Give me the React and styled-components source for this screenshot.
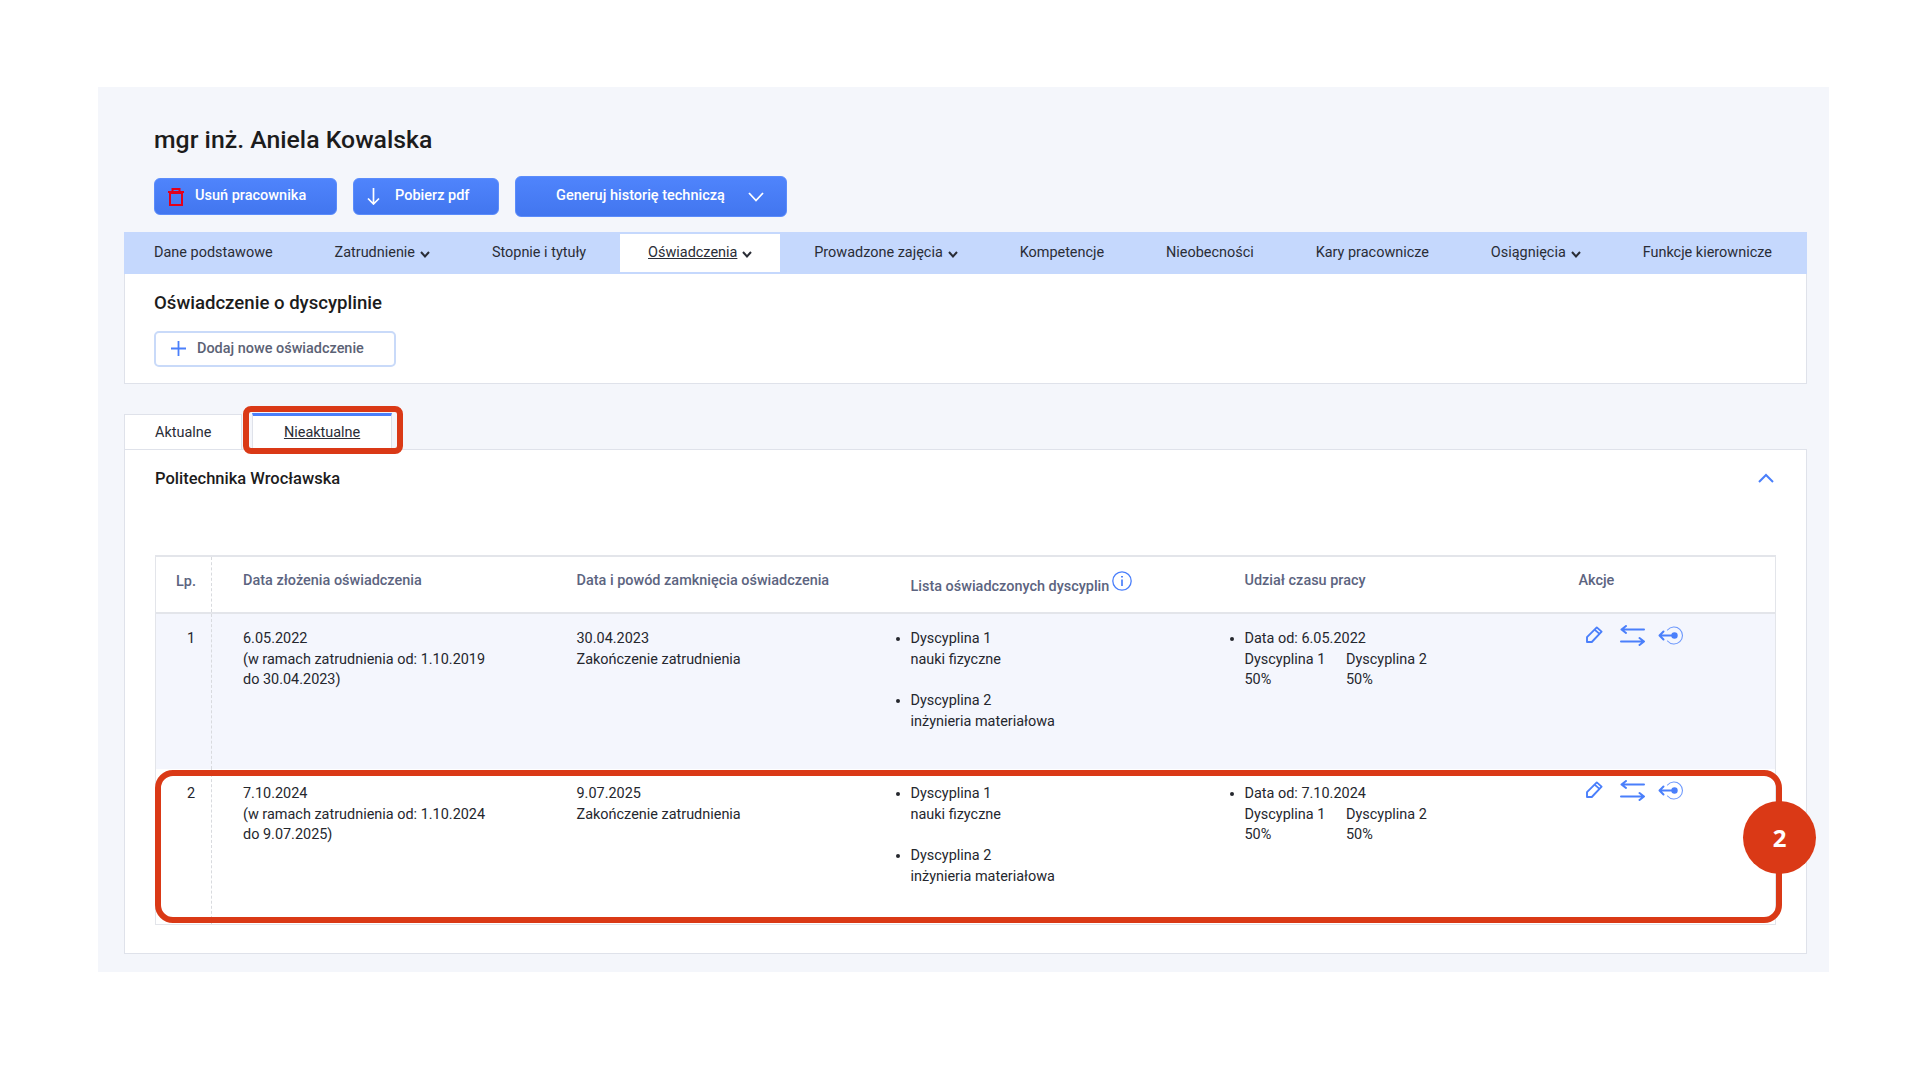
import React from "react"
import styled, { createGlobalStyle } from "styled-components"

const Global = createGlobalStyle`
  * { box-sizing: border-box; }
  html, body { margin: 0; padding: 0; background: #fff; }
  body { font-family: Roboto, "Liberation Sans", sans-serif; color: #222; font-size: 14.45px; }
`

const Panel = styled.div`
  width: 1731px;
  height: 885px;
  margin: 87px 0 0 98px;
  padding: 38px 22px 18px 26px;
  background: #f4f6fb;
`
const Head = styled.div`
  padding-left: 30px;
`
const Title = styled.h1`
  margin: 0;
  font-size: 24.8px;
  line-height: 30px;
  font-weight: 500;
  color: #1c1c1c;
`
const Toolbar = styled.div`
  display: flex;
  align-items: center;
  gap: 16px;
  margin: 21px 0 15px;
`
const Btn = styled.button`
  display: flex;
  align-items: center;
  height: ${p => (p.$big ? 41 : 37)}px;
  width: ${p => p.$w}px;
  padding: 0 0 2px ${p => p.$pl}px;
  border: 1px solid #5b8cfb;
  border-radius: 6px;
  background: linear-gradient(#4f84fc, #4276ef);
  color: #fff;
  font: 500 14.5px Roboto, sans-serif;
`
const BtnIcon = styled.svg`
  flex: none;
  margin: 2px ${p => p.$mr || 0}px 0 ${p => p.$ml || 0}px;
`
const Nav = styled.nav`
  display: flex;
  justify-content: space-between;
  height: 42px;
  padding: 2px 7px 2px 2px;
  background: #c5d8fd;
`
const NavItem = styled.a`
  display: flex;
  align-items: center;
  padding: 0 28px 1px;
  background: ${p => (p.$active ? "#fff" : "transparent")};
  color: #2a2d36;
  font-size: 14.45px;
  span { text-decoration: ${p => (p.$active ? "underline" : "none")}; }
`
const Caret = styled.svg`
  margin: 3px 0 0 5px;
`
const TopCard = styled.section`
  height: 110px;
  padding: 17px 29px 0;
  background: #fff;
  border: 1px solid #dfe2ea;
  border-top: 0;
`
const SectionTitle = styled.h2`
  margin: 0;
  font-size: 18.6px;
  line-height: 24px;
  font-weight: 500;
  color: #1c1c1c;
`
const AddBtn = styled.button`
  display: flex;
  align-items: center;
  gap: 11px;
  width: 242px;
  height: 36px;
  margin-top: 16px;
  padding: 0 0 1px 15px;
  background: #fff;
  border: 2px solid #c9daf9;
  border-radius: 5px;
  color: #5b6275;
  font: 500 14.45px Roboto, sans-serif;
`
const Tabs = styled.div`
  display: flex;
  gap: 9.5px;
  height: 35px;
  margin-top: 30px;
`
const Tab = styled.a`
  position: relative;
  display: flex;
  align-items: center;
  padding: 0 30px;
  background: #fff;
  color: #2a2d36;
  font-size: 14.45px;
  border: 1px solid #dfe2ea;
  border-bottom: 0;
  ${p => p.$active && `
    padding: 0 31px;
    margin-top: -1px;
    height: 36px;
    border-top: 3px solid #4a7ffb;
    text-decoration: underline;
  `}
`
const Callout = styled.div`
  position: absolute;
  border: 6px solid #da3916;
  pointer-events: none;
`
const TabCallout = styled(Callout)`
  left: -10px;
  right: -12px;
  top: -10px;
  bottom: -5px;
  border-radius: 8px;
`
const ListCard = styled.section`
  height: 505px;
  padding: 16px 30px 0;
  background: #fff;
  border: 1px solid #dfe2ea;
`
const ListHead = styled.div`
  display: flex;
  justify-content: space-between;
  align-items: center;
  height: 24px;
  padding-right: 2px;
`
const School = styled.h3`
  margin: 0;
  font-size: 16.5px;
  font-weight: 500;
  color: #1c1c1c;
`
const Table = styled.div`
  width: 1621px;
  margin-top: 65px;
  border: 1px solid #e3e5ea;
  border-top-width: 2px;
`
const Row = styled.div`
  position: relative;
  display: grid;
  grid-template-columns: 56px 333.5px 334px 334px 334px 1fr;
  height: ${p => (p.$head ? 57 : 155)}px;
  background: ${p => (p.$tint ? "#f4f6fd" : "#fff")};
  border-bottom: ${p => (p.$head ? "2px solid #e3e5ea" : "0")};
`
const Cell = styled.div`
  padding: 15px 10px 0 31px;
  line-height: 20.7px;
  color: #25272e;
`
const NumCell = styled(Cell)`
  padding: 15px 16px 0 0;
  text-align: right;
  border-right: 1px dashed #d8dade;
`
const HeadCell = styled(Cell)`
  display: flex;
  align-items: flex-start;
  padding-top: ${p => (p.$low ? 20 : 14)}px;
  color: #5c6480;
  font-weight: 500;
`
const HeadNum = styled(HeadCell)`
  justify-content: flex-end;
  padding: 15px 15px 0 0;
  border-right: 1px dashed #d8dade;
`
const Info = styled.svg`
  flex: none;
  margin: -6px 0 0 3px;
`
const Bullets = styled.ul`
  margin: 0;
  padding: 0;
  li + li { margin-top: 20.7px; }
`
const Shares = styled.div`
  display: grid;
  grid-template-columns: 101.5px 101.5px;
`
const Actions = styled.div`
  display: flex;
  align-items: flex-start;
  margin: -3px 0 0 7px;
`
const ActionSlot = styled.span`
  display: block;
  margin: ${p => p.$up || 0}px 0 0 ${p => p.$gap || 0}px;
`
const RowCallout = styled(Callout)`
  left: -1px;
  right: -7px;
  top: 1px;
  bottom: 1px;
  border-radius: 18px;
`
const Badge = styled.div`
  position: absolute;
  top: 25px;
  right: -40px;
  width: 73px;
  height: 73px;
  display: flex;
  align-items: center;
  justify-content: center;
  border-radius: 50%;
  background: #da3916;
  color: #fff;
  font: 700 24px "Open Sans", sans-serif;
`

const tabs = [
  { label: "Dane podstawowe" },
  { label: "Zatrudnienie", menu: true },
  { label: "Stopnie i tytuły" },
  { label: "Oświadczenia", menu: true, active: true },
  { label: "Prowadzone zajęcia", menu: true },
  { label: "Kompetencje" },
  { label: "Nieobecności" },
  { label: "Kary pracownicze" },
  { label: "Osiągnięcia", menu: true },
  { label: "Funkcje kierownicze" },
]

const rows = [
  {
    no: 1,
    filed: "6.05.2022",
    scope: "(w ramach zatrudnienia od: 1.10.2019",
    scopeEnd: "do 30.04.2023)",
    closed: "30.04.2023",
    from: "6.05.2022",
    tint: true,
  },
  {
    no: 2,
    filed: "7.10.2024",
    scope: "(w ramach zatrudnienia od: 1.10.2024",
    scopeEnd: "do 9.07.2025)",
    closed: "9.07.2025",
    from: "7.10.2024",
    marked: true,
  },
]

function PencilIcon() {
  return (
    <svg width="17" height="17" viewBox="0 0 17 17" fill="none" stroke="#4a7ffb" strokeWidth="1.9" strokeLinejoin="round">
      <path d="M1 16V11.2L10.8 1.4 15.6 5.6 5.8 16Z" />
      <path d="M8.6 3.6l4.9 4.3" />
    </svg>
  )
}

function SwapIcon() {
  return (
    <svg width="25" height="21" viewBox="0 0 25 21" fill="none" stroke="#4a7ffb" strokeWidth="2" strokeLinecap="round" strokeLinejoin="round">
      <path d="M1.5 4.5H24M6 1L1.5 4.5 6 8" />
      <path d="M1 16.5H24M19.5 13l4.5 3.5-4.5 3.5" />
    </svg>
  )
}

function ReturnIcon() {
  return (
    <svg width="27" height="19" viewBox="0 0 27 19" fill="none" stroke="#4a7ffb" strokeLinecap="round" strokeLinejoin="round">
      <path d="M9.5 4A8.5 8.5 0 1 1 9.5 15" strokeWidth="1.1" strokeOpacity=".8" />
      <path d="M1.5 9.5H16M5.5 5.5l-4 4 4 4" strokeWidth="2" />
      <circle cx="16.5" cy="9.5" r="3.2" fill="#4a7ffb" stroke="none" />
    </svg>
  )
}

export default function App() {
  return (
    <>
      <Global />
      <Panel>
        <Head>
          <Title>mgr inż. Aniela Kowalska</Title>
          <Toolbar>
            <Btn $w={183} $pl={12}>
              <BtnIcon $mr={10} width="18" height="18" viewBox="0 0 18 18" fill="none" stroke="#e3001b" strokeWidth="2">
                <path d="M1 4H17M5.5 4V1H12.5V4" />
                <rect x="3" y="5" width="12" height="12" />
              </BtnIcon>
              Usuń pracownika
            </Btn>
            <Btn $w={146} $pl={13}>
              <BtnIcon $mr={15} width="13" height="17" viewBox="0 0 13 17" fill="none" stroke="#fff" strokeWidth="1.7">
                <path d="M6.5 0V16M1 10.5L6.5 16 12 10.5" />
              </BtnIcon>
              Pobierz pdf
            </Btn>
            <Btn $big $w={272} $pl={40}>
              Generuj historię techniczą
              <BtnIcon $ml={23} width="16" height="10" viewBox="0 0 16 10" fill="none" stroke="#fff" strokeWidth="1.8">
                <path d="M1 1l7 7.5L15 1" />
              </BtnIcon>
            </Btn>
          </Toolbar>
        </Head>
        <Nav>
          {tabs.map(t => (
            <NavItem key={t.label} $active={t.active}>
              <span>{t.label}</span>
              {t.menu && (
                <Caret width="10" height="7" viewBox="0 0 10 7" fill="none" stroke="#2a2d36" strokeWidth="2">
                  <path d="M1 1l4 4.5L9 1" />
                </Caret>
              )}
            </NavItem>
          ))}
        </Nav>
        <TopCard>
          <SectionTitle>Oświadczenie o dyscyplinie</SectionTitle>
          <AddBtn>
            <svg width="15" height="15" viewBox="0 0 15 15" fill="none" stroke="#4a7ffb" strokeWidth="1.8">
              <path d="M7.5 0V15M0 7.5H15" />
            </svg>
            Dodaj nowe oświadczenie
          </AddBtn>
        </TopCard>
        <Tabs>
          <Tab>Aktualne</Tab>
          <Tab $active>
            Nieaktualne
            <TabCallout />
          </Tab>
        </Tabs>
        <ListCard>
          <ListHead>
            <School>Politechnika Wrocławska</School>
            <svg width="16" height="10" viewBox="0 0 16 10" fill="none" stroke="#4a7ffb" strokeWidth="2">
              <path d="M1 9l7-7 7 7" />
            </svg>
          </ListHead>
          <Table>
            <Row $head>
              <HeadNum>Lp.</HeadNum>
              <HeadCell>Data złożenia oświadczenia</HeadCell>
              <HeadCell>Data i powód zamknięcia oświadczenia</HeadCell>
              <HeadCell $low>
                Lista oświadczonych dyscyplin
                <Info width="20" height="20" viewBox="0 0 20 20" fill="none" stroke="#4a7ffb">
                  <circle cx="10" cy="10" r="9.2" strokeWidth="1.3" />
                  <path d="M10 8.5V15" strokeWidth="1.7" />
                  <path d="M10 5V6.6" strokeWidth="1.9" />
                </Info>
              </HeadCell>
              <HeadCell>Udział czasu pracy</HeadCell>
              <HeadCell>Akcje</HeadCell>
            </Row>
            {rows.map(r => (
              <Row key={r.no} $tint={r.tint}>
                <NumCell>{r.no}</NumCell>
                <Cell>
                  {r.filed}
                  <br />
                  {r.scope}
                  <br />
                  {r.scopeEnd}
                </Cell>
                <Cell>
                  {r.closed}
                  <br />
                  Zakończenie zatrudnienia
                </Cell>
                <Cell>
                  <Bullets>
                    <li>
                      Dyscyplina 1
                      <br />
                      nauki fizyczne
                    </li>
                    <li>
                      Dyscyplina 2
                      <br />
                      inżynieria materiałowa
                    </li>
                  </Bullets>
                </Cell>
                <Cell>
                  <Bullets>
                    <li>
                      Data od: {r.from}
                      <Shares>
                        <span>Dyscyplina 1</span>
                        <span>Dyscyplina 2</span>
                        <span>50%</span>
                        <span>50%</span>
                      </Shares>
                    </li>
                  </Bullets>
                </Cell>
                <Cell>
                  <Actions>
                    <ActionSlot><PencilIcon /></ActionSlot>
                    <ActionSlot $gap={17} $up={-1}><SwapIcon /></ActionSlot>
                    <ActionSlot $gap={13}><ReturnIcon /></ActionSlot>
                  </Actions>
                </Cell>
                {r.marked && (
                  <RowCallout>
                    <Badge>2</Badge>
                  </RowCallout>
                )}
              </Row>
            ))}
          </Table>
        </ListCard>
      </Panel>
    </>
  )
}
